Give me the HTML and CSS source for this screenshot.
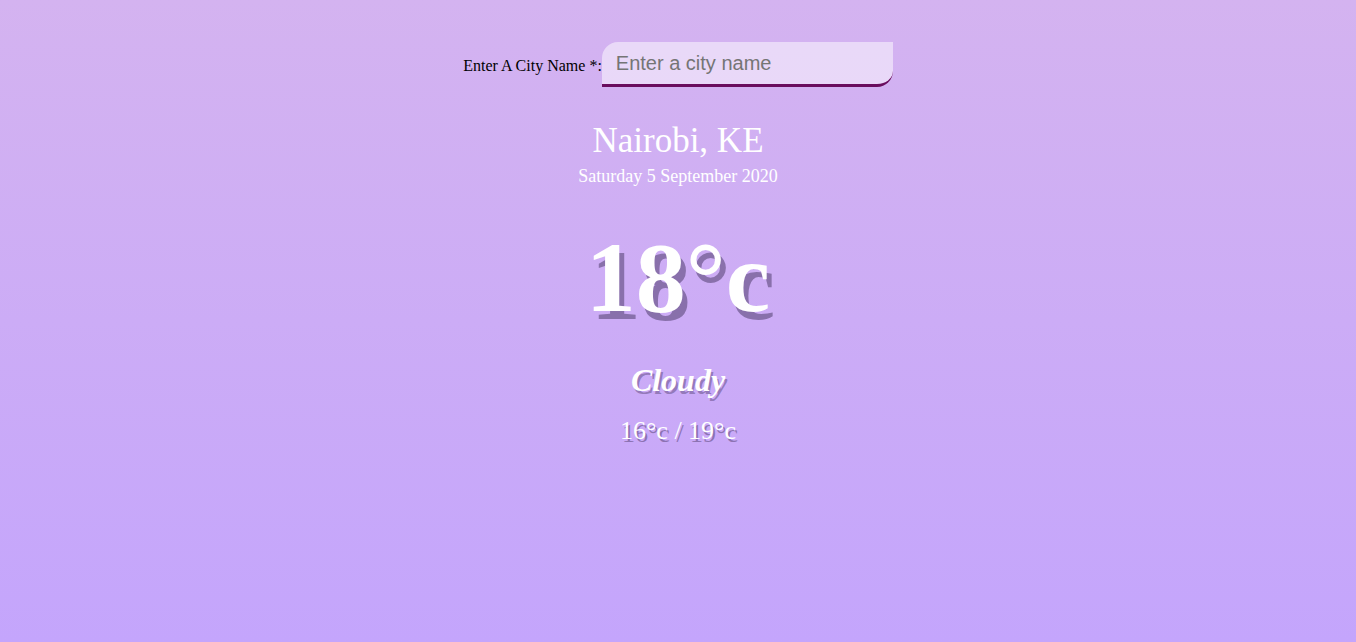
FILE: index.html
```html
<!DOCTYPE html>
<html>
<head>
<meta charset="utf-8">
<link rel="stylesheet" href="styles.css">
</head>
<body>
<div class="app">
  <header class="search">
    <label class="search-label" for="city">Enter A City Name *:</label>
    <input id="city" class="search-box" type="text" placeholder="Enter a city name">
  </header>
  <main class="weather">
    <section class="location">
      <div class="city">Nairobi, KE</div>
      <div class="date">Saturday 5 September 2020</div>
    </section>
    <section class="current">
      <div class="temp">18°c</div>
      <div class="desc">Cloudy</div>
      <div class="hi-low">16°c / 19°c</div>
    </section>
  </main>
</div>
</body>
</html>
```
FILE: styles.css
```css
* { box-sizing: border-box; }
html, body { height: 100%; }
body {
  margin: 0;
  font-family: "Liberation Serif", "Times New Roman", serif;
  background: linear-gradient(to bottom, #d4b3f0, #c4a5fc);
}
.app {
  min-height: 100vh;
  padding-top: 42px;
}
.search {
  display: flex;
  justify-content: center;
  align-items: center;
}
.search-label {
  font-size: 16px;
  color: #000;
  margin-top: 2px;
}
.search-box {
  width: 291px;
  height: 45px;
  padding: 0 14px;
  border: none;
  border-bottom: 3px solid #6a0d5e;
  border-radius: 16px 0 16px 0;
  background: rgba(255, 255, 255, 0.5);
  font-family: "Liberation Sans", Arial, sans-serif;
  font-size: 20px;
  color: #333;
  outline: none;
}
.search-box::placeholder { color: #757575; }
.weather {
  display: flex;
  flex-direction: column;
  align-items: center;
  color: #fff;
}
.location {
  margin-top: 34px;
  text-align: center;
}
.city {
  font-size: 35px;
  line-height: 40px;
}
.date {
  font-size: 18px;
  line-height: 22px;
  margin-top: 4px;
}
.current {
  text-align: center;
  margin-top: 21px;
}
.temp {
  font-size: 100px;
  font-weight: 900;
  line-height: 140px;
  text-shadow: 5px 8px rgba(100, 80, 130, 0.65);
}
.desc {
  font-size: 32px;
  font-weight: 700;
  font-style: italic;
  line-height: 40px;
  margin-top: 12px;
  text-shadow: 2px 3px rgba(80, 60, 110, 0.45);
}
.hi-low {
  font-size: 26px;
  line-height: 34px;
  margin-top: 14px;
  text-shadow: 2px 3px rgba(80, 60, 110, 0.5);
}
```
